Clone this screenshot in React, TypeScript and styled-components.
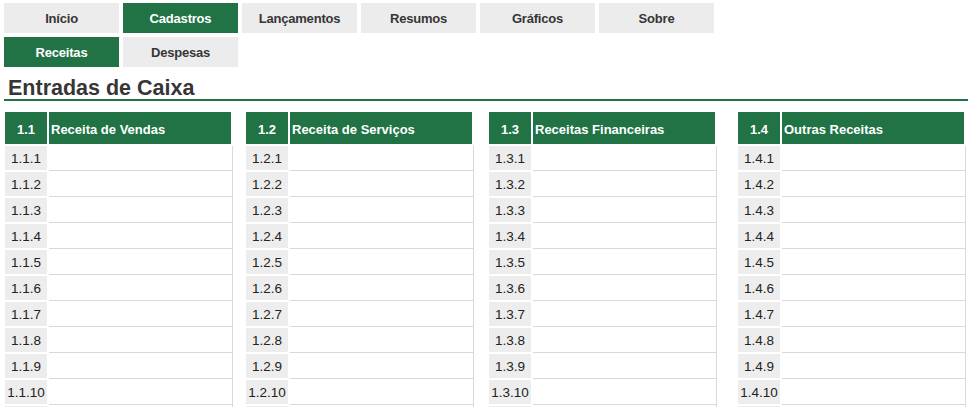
import React from 'react'
import styled, { createGlobalStyle } from 'styled-components'

const GREEN = '#217346'

const GlobalStyle = createGlobalStyle`
  html,
  body {
    margin: 0;
    padding: 0;
    overflow: hidden;
    background: #ffffff;
    font-family: 'Liberation Sans', Arial, sans-serif;
  }
`

const Page = styled.div`
  display: flex;
  flex-direction: column;
  width: 968px;
  height: 407px;
  overflow: hidden;
`

const Nav = styled.nav`
  display: grid;
  grid-template-columns: repeat(6, 115px);
  gap: 4px;
  padding: 3px 0 0 4px;
`

const NavButton = styled.div<{ $active?: boolean }>`
  height: 30px;
  display: flex;
  align-items: center;
  justify-content: center;
  font-size: 13px;
  font-weight: 700;
  letter-spacing: -0.2px;
  background: ${(p) => (p.$active ? GREEN : '#ececec')};
  color: ${(p) => (p.$active ? '#ffffff' : '#363636')};
`

const SectionHeading = styled.div`
  margin: 10px 0 0 4px;
  border-bottom: 2px solid ${GREEN};
`

const Title = styled.h1`
  margin: 0;
  padding-left: 4px;
  font-size: 21.5px;
  line-height: 22px;
  font-weight: 700;
  color: #363636;
`

const Tables = styled.div`
  display: flex;
  margin-top: 11px;
`

const Table = styled.div<{ $offset: number }>`
  display: flex;
  flex-direction: column;
  width: 228px;
  margin-left: ${(p) => p.$offset}px;
`

const HeaderRow = styled.div`
  display: grid;
  grid-template-columns: 42px 182px;
  column-gap: 2px;
  height: 32px;
  margin-bottom: 2px;
`

const HeaderCell = styled.div<{ $center?: boolean }>`
  background: ${GREEN};
  color: #ffffff;
  font-size: 13px;
  font-weight: 700;
  line-height: 36px;
  height: 32px;
  text-align: ${(p) => (p.$center ? 'center' : 'left')};
  padding-left: ${(p) => (p.$center ? 0 : 2)}px;
  white-space: nowrap;
`

const Row = styled.div`
  display: grid;
  grid-template-columns: 42px 184px;
  column-gap: 2px;
  height: 26px;
  flex-shrink: 0;
`

const CodeCell = styled.div`
  height: 24px;
  background: #ededed;
  color: #222222;
  font-size: 13.5px;
  line-height: 26px;
  text-align: center;
  white-space: nowrap;
`

const EntryCell = styled.div`
  height: 26px;
  box-sizing: border-box;
  border-right: 1px solid #d9d9d9;
  background: linear-gradient(
    to bottom,
    #ffffff 0,
    #ffffff 24px,
    #d9d9d9 24px,
    #d9d9d9 25px,
    #ffffff 25px
  );
`

const groups = [
  { code: '1.1', name: 'Receita de Vendas', offset: 5 },
  { code: '1.2', name: 'Receita de Serviços', offset: 13 },
  { code: '1.3', name: 'Receitas Financeiras', offset: 15 },
  { code: '1.4', name: 'Outras Receitas', offset: 21 },
]

const navTop = ['Início', 'Cadastros', 'Lançamentos', 'Resumos', 'Gráficos', 'Sobre']

const rows = Array.from({ length: 10 }, (_, i) => i + 1)

const App = () => {
  return (
    <>
      <GlobalStyle />
      <Page>
        <Nav>
          {navTop.map((label) => (
            <NavButton key={label} $active={label === 'Cadastros'}>
              {label}
            </NavButton>
          ))}
          <NavButton $active>Receitas</NavButton>
          <NavButton>Despesas</NavButton>
        </Nav>

        <SectionHeading>
          <Title>Entradas de Caixa</Title>
        </SectionHeading>

        <Tables>
          {groups.map((g) => (
            <Table key={g.code} $offset={g.offset}>
              <HeaderRow>
                <HeaderCell $center>{g.code}</HeaderCell>
                <HeaderCell>{g.name}</HeaderCell>
              </HeaderRow>
              {rows.map((n) => (
                <Row key={n}>
                  <CodeCell>
                    {g.code}.{n}
                  </CodeCell>
                  <EntryCell />
                </Row>
              ))}
              {/* next row peeks in at the bottom edge */}
              <Row>
                <CodeCell />
                <EntryCell />
              </Row>
            </Table>
          ))}
        </Tables>
      </Page>
    </>
  )
}

export default App
